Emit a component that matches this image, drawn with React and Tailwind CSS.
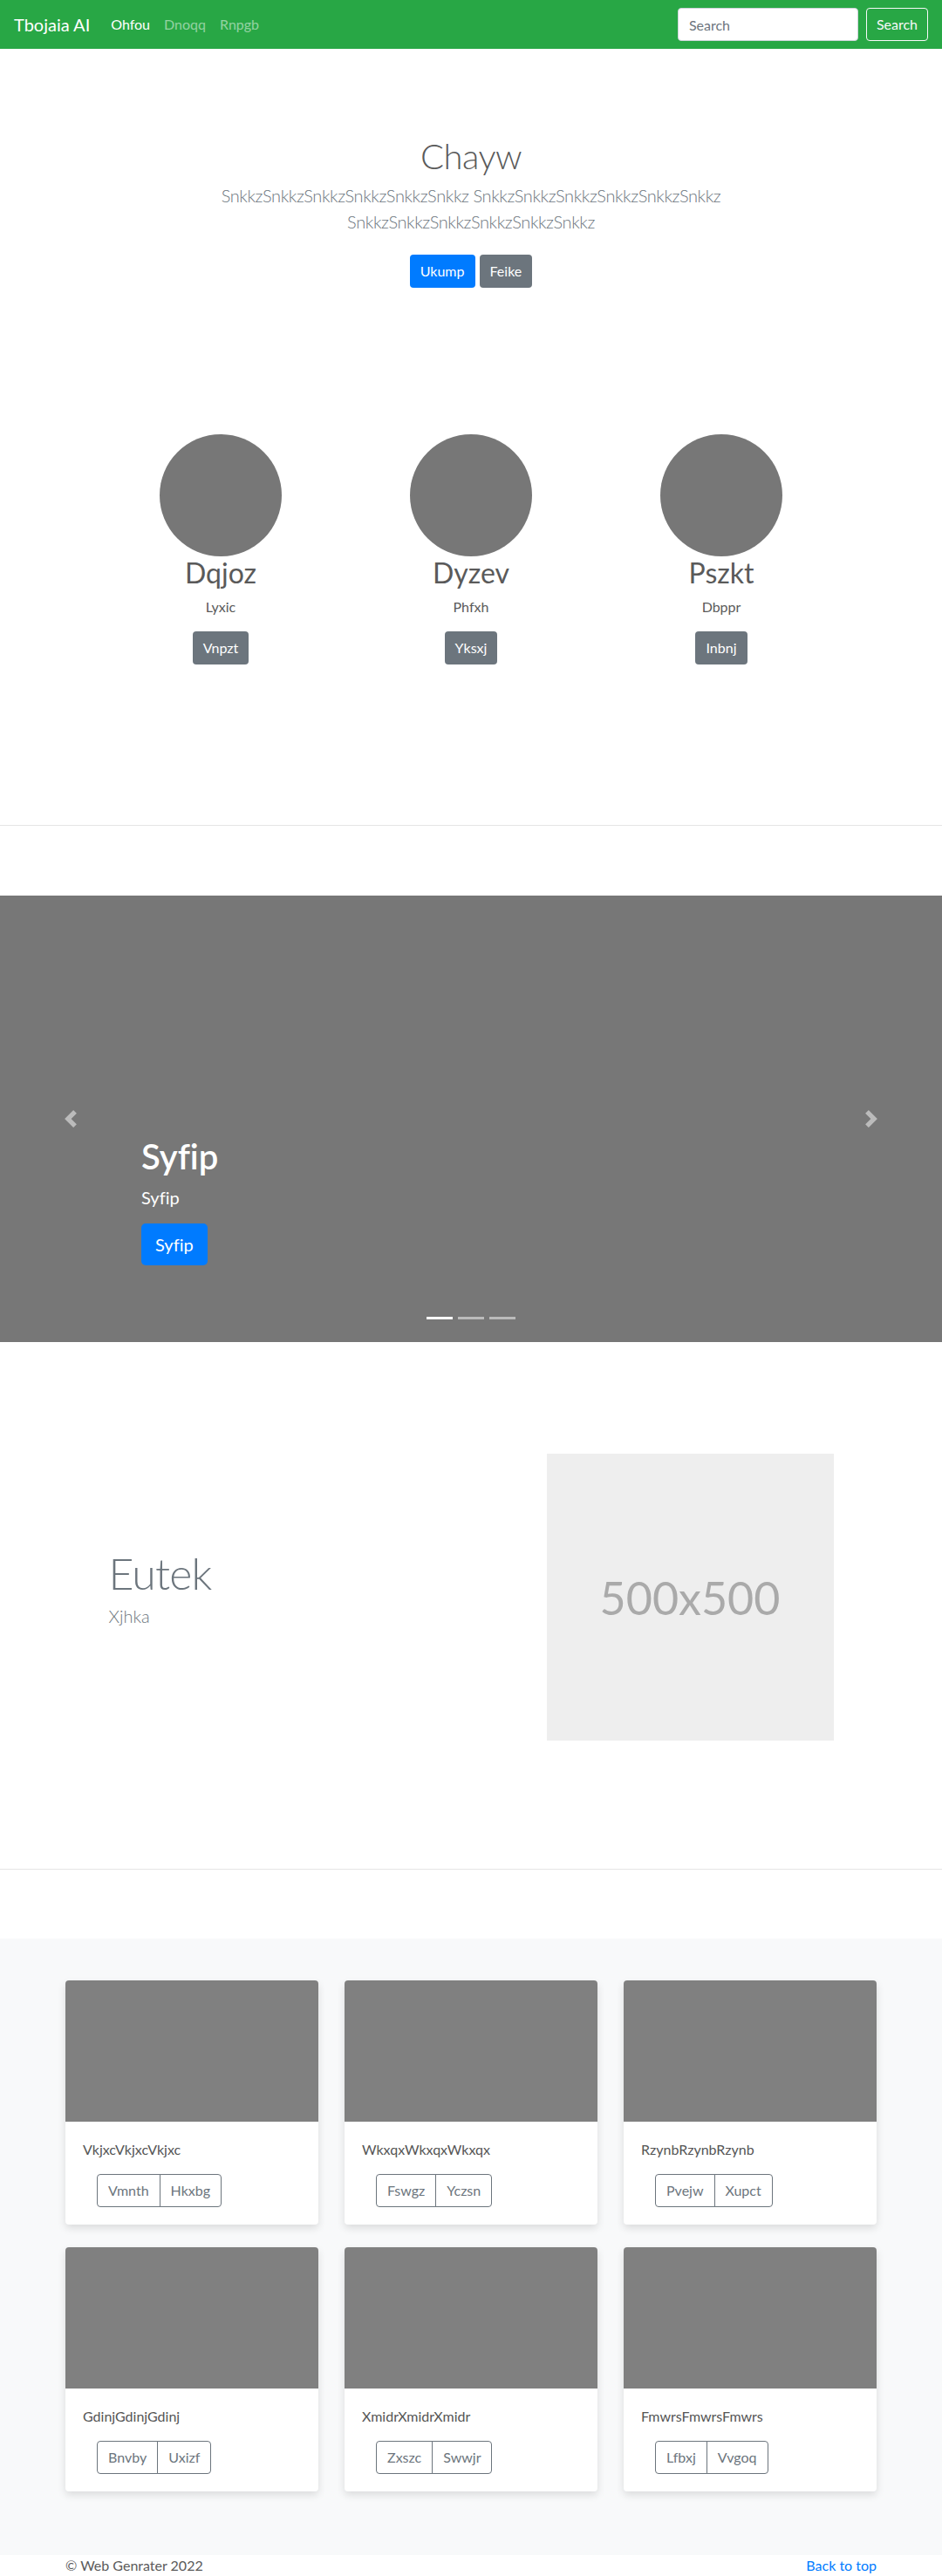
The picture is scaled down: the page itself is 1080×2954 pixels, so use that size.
import React from "react";

const circles = [
  { t: "Dqjoz", s: "Lyxic", b: "Vnpzt" },
  { t: "Dyzev", s: "Phfxh", b: "Yksxj" },
  { t: "Pszkt", s: "Dbppr", b: "Inbnj" },
];

const cards = [
  { t: "VkjxcVkjxcVkjxc", a: "Vmnth", b: "Hkxbg" },
  { t: "WkxqxWkxqxWkxqx", a: "Fswgz", b: "Yczsn" },
  { t: "RzynbRzynbRzynb", a: "Pvejw", b: "Xupct" },
  { t: "GdinjGdinjGdinj", a: "Bnvby", b: "Uxizf" },
  { t: "XmidrXmidrXmidr", a: "Zxszc", b: "Swwjr" },
  { t: "FmwrsFmwrsFmwrs", a: "Lfbxj", b: "Vvgoq" },
];

export default function App() {
  return (
    <div className="font-['Lato','Liberation_Sans',sans-serif] [font-variant-ligatures:none] bg-white text-[#5a5a5a] text-base">
      {/* Navbar */}
      <nav className="h-14 bg-[#28a745] flex items-center px-4">
        <span className="text-white text-[20px] leading-[30px] mr-4">Tbojaia AI</span>
        <a className="px-2 text-white text-base leading-6">Ohfou</a>
        <a className="px-2 text-white/50 text-base leading-6">Dnoqq</a>
        <a className="px-2 text-white/50 text-base leading-6">Rnpgb</a>
        <div className="ml-auto flex items-center gap-[9px]">
          <input
            placeholder="Search"
            className="w-[207px] h-[38px] rounded bg-white border border-[#ced4da] px-3 text-base text-[#495057] placeholder:text-[#6c757d] outline-none"
          />
          <button className="h-[38px] px-[11px] rounded border border-[#f8f9fa] text-[#f8f9fa] text-base">
            Search
          </button>
        </div>
      </nav>

      {/* Hero */}
      <section className="pt-[99px] text-center">
        <h1 className="text-[40px] leading-[48px] font-light tracking-[-0.5px] text-[#5a5a5a]">Chayw</h1>
        <p className="mt-[6px] max-w-[610px] mx-auto text-[20px] leading-[30px] font-light tracking-[-0.4px] text-[#6c757d]">
          SnkkzSnkkzSnkkzSnkkzSnkkzSnkkz SnkkzSnkkzSnkkzSnkkzSnkkzSnkkz SnkkzSnkkzSnkkzSnkkzSnkkzSnkkz
        </p>
        <div className="mt-[23px] flex justify-center gap-[5px]">
          <button className="h-[38px] px-3 rounded bg-[#007bff] text-white text-base">Ukump</button>
          <button className="h-[38px] px-3 rounded bg-[#6c757d] text-white text-base">Feike</button>
        </div>
      </section>

      {/* Circles */}
      <section className="mt-[168px] w-[861px] mx-auto grid grid-cols-3 text-center">
        {circles.map((c) => (
          <div key={c.t} className="flex flex-col items-center">
            <div className="w-[140px] h-[140px] rounded-full bg-[#777]" />
            <h2 className="text-[32px] leading-[38px] text-[#5a5a5a]">{c.t}</h2>
            <p className="mt-2 text-base leading-6 text-[#5a5a5a]">{c.s}</p>
            <button className="mt-4 h-[38px] px-3 rounded bg-[#6c757d] text-white text-base">{c.b}</button>
          </div>
        ))}
      </section>

      <hr className="mt-[184px] mb-20 border-0 border-t border-black/10" />

      {/* Carousel */}
      <section className="relative h-[512px] bg-[#777] flex flex-col justify-end pb-[88px] pl-[162px]">
        <div className="absolute left-0 inset-y-0 w-[15%] flex items-center justify-center">
          <svg width="20" height="20" viewBox="0 0 8 8" className="opacity-50">
            <path fill="#fff" d="M5.25 0l-4 4 4 4 1.5-1.5L4.25 4l2.5-2.5L5.25 0z" />
          </svg>
        </div>
        <div className="absolute right-0 inset-y-0 w-[15%] flex items-center justify-center">
          <svg width="20" height="20" viewBox="0 0 8 8" className="opacity-50">
            <path fill="#fff" d="M2.75 0l-1.5 1.5L3.75 4l-2.5 2.5L2.75 8l4-4-4-4z" />
          </svg>
        </div>
        <h1 className="text-[40px] leading-[48px] font-semibold text-white">Syfip</h1>
        <p className="mt-2 text-[20px] leading-[30px] text-white">Syfip</p>
        <div className="mt-[15px]">
          <button className="h-[48px] px-4 rounded-[5px] bg-[#007bff] text-white text-[20px]">Syfip</button>
        </div>
        <div className="absolute bottom-[26px] left-0 right-0 flex justify-center gap-[6px]">
          <span className="w-[30px] h-[3px] bg-white" />
          <span className="w-[30px] h-[3px] bg-white/50" />
          <span className="w-[30px] h-[3px] bg-white/50" />
        </div>
      </section>

      {/* Feature */}
      <section className="mt-[128px] w-[831px] mx-auto flex items-center">
        <div className="flex-1">
          <h2 className="text-[50px] leading-none font-light tracking-[-0.8px] text-[#6c757d]">Eutek</h2>
          <p className="mt-[9px] mb-4 text-[20px] leading-[30px] font-light text-[#6c757d]">Xjhka</p>
        </div>
        <div className="w-[329px] h-[329px] bg-[#eeeeee] flex items-center justify-center">
          <span className="text-[52px] text-[#aaaaaa]">500x500</span>
        </div>
      </section>

      <hr className="mt-[147px] mb-[79px] border-0 border-t border-black/10" />

      {/* Cards */}
      <section className="bg-[#f8f9fa] pt-12 pb-[73px]">
        <div className="w-[930px] mx-auto grid grid-cols-3 gap-x-[30px] gap-y-[26px]">
          {cards.map((c) => (
            <div key={c.t} className="bg-white rounded shadow-[0_4px_10px_rgba(0,0,0,0.12)] overflow-hidden">
              <div className="h-[162px] bg-[#808080]" />
              <div className="p-5">
                <p className="text-base leading-6 text-[#555]">{c.t}</p>
                <div className="mt-4 ml-4 flex">
                  <button className="h-[38px] px-3 rounded-l border border-[#6c757d] text-[#6c757d] text-base">{c.a}</button>
                  <button className="h-[38px] px-3 -ml-px rounded-r border border-[#6c757d] text-[#6c757d] text-base">{c.b}</button>
                </div>
              </div>
            </div>
          ))}
        </div>
      </section>

      {/* Footer */}
      <footer className="w-[930px] mx-auto flex justify-between h-6 text-base leading-6">
        <span className="text-[#5a5a5a]">© Web Genrater 2022</span>
        <a className="text-[#007bff]">Back to top</a>
      </footer>
    </div>
  );
}
